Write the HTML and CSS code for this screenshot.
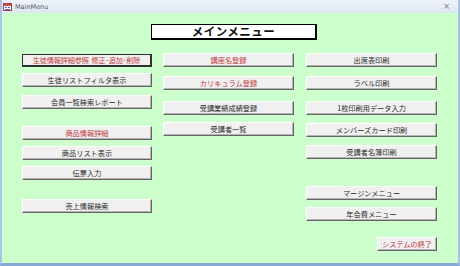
FILE: index.html
```html
<!DOCTYPE html>
<html lang="ja">
<head>
<meta charset="utf-8">
<title>MainMenu</title>
<link rel="stylesheet" href="styles.css">
</head>
<body>
<div class="window">
  <div class="titlebar">
    <svg class="ticon" width="9" height="8" viewBox="0 0 9 8">
      <rect x="0.5" y="0.5" width="8" height="7" fill="#fff" stroke="#b04040"/>
      <rect x="1" y="1" width="7" height="2" fill="#c05050"/>
      <rect x="2" y="4" width="2" height="1" fill="#3a6cc0"/>
      <rect x="5" y="4" width="2" height="1" fill="#3a6cc0"/>
      <rect x="2" y="6" width="5" height="1" fill="#3a6cc0"/>
    </svg>
    <span class="ttext">MainMenu</span>
    <span class="tclose">×</span>
  </div>
  <div class="body">
    <div class="heading-row">
      <div class="heading">メインメニュー</div>
    </div>
    <div class="cols">
      <div class="col c1">
        <div class="btn red focus">生徒情報詳細参照&nbsp;&nbsp;修正･追加･削除</div>
        <div class="btn m6">生徒リストフィルタ表示</div>
        <div class="btn m8">会員一覧検索レポート</div>
        <div class="btn red m17">商品情報詳細</div>
        <div class="btn m6">商品リスト表示</div>
        <div class="btn m6">伝票入力</div>
        <div class="btn m19">売上情報検索</div>
      </div>
      <div class="col c2">
        <div class="btn red">講座名登録</div>
        <div class="btn red m9">カリキュラム登録</div>
        <div class="btn m11">受講業績成績登録</div>
        <div class="btn m7">受講者一覧</div>
      </div>
      <div class="col c3">
        <div class="btn">出席表印刷</div>
        <div class="btn m9">ラベル印刷</div>
        <div class="btn m11">1枚印刷用データ入力</div>
        <div class="btn m8">メンバーズカード印刷</div>
        <div class="btn m8">受講者名簿印刷</div>
        <div class="btn m27">マージンメニュー</div>
        <div class="btn m7">年会費メニュー</div>
        <div class="btn red exit">システムの終了</div>
      </div>
    </div>
  </div>
</div>
</body>
</html>
```

FILE: styles.css
```css
* { box-sizing: border-box; }
html, body { margin: 0; padding: 0; }
body {
  width: 460px;
  height: 266px;
  overflow: hidden;
  font-family: "Noto Sans CJK JP", "Liberation Sans", sans-serif;
  background: #ccffcc;
}
.window {
  width: 460px;
  height: 266px;
  display: flex;
  flex-direction: column;
  border-left: 2px solid #a9c4e6;
  border-right: 2px solid #a9c4e6;
  border-bottom: 3px solid #86a8d6;
}
.titlebar {
  height: 13px;
  flex: none;
  display: flex;
  align-items: center;
  background: linear-gradient(#eef3fa, #dde7f4);
  padding-left: 1px;
  padding-right: 8px;
}
.ticon { flex: none; margin-right: 3px; }
.ttext {
  font-family: "DejaVu Sans", sans-serif;
  font-size: 6.5px;
  color: #555;
  flex: 1;
}
.tclose {
  font-family: "DejaVu Sans", sans-serif;
  font-size: 8px;
  color: #777;
  line-height: 1;
}
.body {
  flex: 1;
  background: #ccffcc;
}
.heading-row {
  display: flex;
  padding-top: 11px;
  padding-left: 149px;
}
.heading {
  width: 166px;
  height: 16px;
  background: #fff;
  border: 1px solid #000;
  border-right-width: 2px;
  border-bottom-width: 2px;
  font-size: 11.5px;
  font-weight: bold;
  line-height: 13px;
  text-align: center;
  letter-spacing: 0.5px;
  color: #111;
}
.cols {
  display: flex;
  padding-left: 20px;
  margin-top: 13px;
}
.col { display: flex; flex-direction: column; }
.c1 { width: 130px; margin-top: 1px; }
.c2 { width: 131px; margin-left: 11px; }
.c3 { width: 131px; margin-left: 12px; }
.btn {
  height: 14px;
  background: #f0f0f0;
  border-style: solid;
  border-width: 1px;
  border-color: #ffffff #646464 #646464 #ffffff;
  box-shadow: inset -1px -1px 0 #b4b4b4;
  font-size: 7.2px;
  line-height: 12px;
  text-align: center;
  color: #2a2a2a;
  white-space: nowrap;
  overflow: hidden;
}
.red { color: #c03a3e; }
.focus {
  border: 1px solid #303030;
  border-right-width: 2px;
  border-bottom-width: 2px;
  box-shadow: none;
  height: 13px;
  line-height: 10px;
  letter-spacing: -0.2px;
}
.m6 { margin-top: 6px; }
.m7 { margin-top: 7px; }
.m8 { margin-top: 8px; }
.m9 { margin-top: 9px; }
.m11 { margin-top: 11px; }
.m17 { margin-top: 17px; }
.m19 { margin-top: 19px; }
.m27 { margin-top: 27px; }
.exit {
  width: 60px;
  align-self: flex-end;
  margin-top: 16px;
}
```
